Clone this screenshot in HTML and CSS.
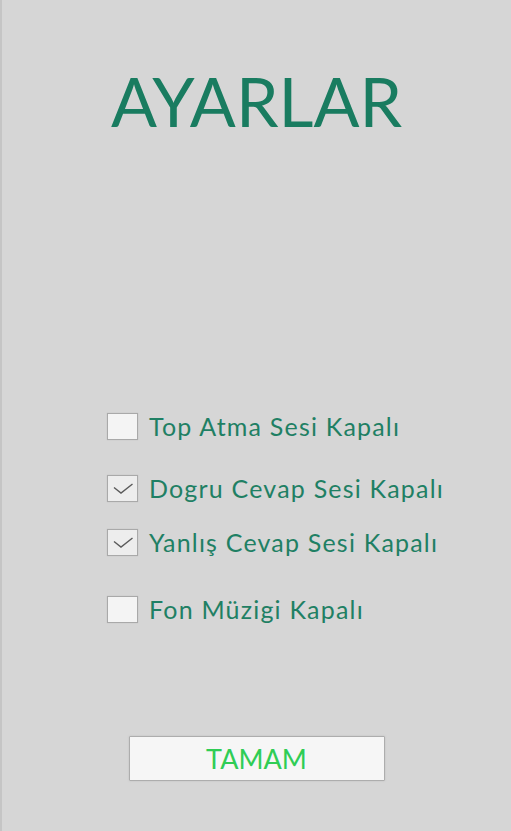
FILE: index.html
```html
<!DOCTYPE html>
<html lang="tr">
<head>
    <meta charset="UTF-8">
    <meta name="viewport" content="width=device-width, initial-scale=1.0">
    <title>Ayarlar</title>
    <link rel="stylesheet" href="styles.css">
</head>
<body>
    <div class="screen">
        <h1 class="title">AYARLAR</h1>

        <div class="options">
            <label class="opt">
                <span class="box"></span>
                <span class="txt">Top Atma Sesi Kapalı</span>
            </label>
            <label class="opt">
                <span class="box checked">
                    <svg viewBox="0 0 29 25" width="29" height="25"><path d="M6 11.5 L13 17 L24.5 8" fill="none" stroke="#5a5a5a" stroke-width="1.4"/></svg>
                </span>
                <span class="txt">Dogru Cevap Sesi Kapalı</span>
            </label>
            <label class="opt">
                <span class="box checked">
                    <svg viewBox="0 0 29 25" width="29" height="25"><path d="M6 11.5 L13 17 L24.5 8" fill="none" stroke="#5a5a5a" stroke-width="1.4"/></svg>
                </span>
                <span class="txt">Yanlış Cevap Sesi Kapalı</span>
            </label>
            <label class="opt">
                <span class="box"></span>
                <span class="txt">Fon Müzigi Kapalı</span>
            </label>
        </div>

        <button class="ok">TAMAM</button>
    </div>
</body>
</html>
```

FILE: styles.css
```css
body{
    margin: 0;
    background-color: #d6d6d6;
    font-family: Lato, "Open Sans", sans-serif;
}
.screen{
    min-height: 831px;
    border-left: 2px solid #c5c5c5;
    box-sizing: border-box;
}
.title{
    margin: 0;
    padding-top: 67px;
    line-height: 68px;
    font-size: 68px;
    font-weight: 400;
    text-align: center;
    color: #197c60;
}
.options{
    margin-top: 278px;
    padding-left: 105px;
}
.opt{
    display: flex;
    align-items: center;
    height: 26px;
}
.opt:nth-child(2){
    margin-top: 36px;
}
.opt:nth-child(3){
    margin-top: 28px;
}
.opt:nth-child(4){
    margin-top: 41px;
}
.box{
    width: 29px;
    height: 25px;
    border: 1px solid #a9a9a9;
    background-color: #f4f4f4;
    box-shadow: 0 0 1px #b8b8b8;
    flex-shrink: 0;
}
.box.checked{
    background-color: #ededed;
}
.box svg{
    display: block;
}
.txt{
    margin-left: 11px;
    font-size: 25px;
    line-height: 26px;
    letter-spacing: 1.2px;
    color: #1f8064;
}
.ok{
    display: block;
    width: 256px;
    height: 45px;
    margin: 114px auto 0;
    background-color: #f6f6f6;
    border: 1px solid #adadad;
    border-radius: 1px;
    box-shadow: 0 0 2px #bdbdbd;
    font-family: Lato, "Open Sans", sans-serif;
    font-size: 27px;
    color: #2fcd55;
    padding: 0;
}
```
